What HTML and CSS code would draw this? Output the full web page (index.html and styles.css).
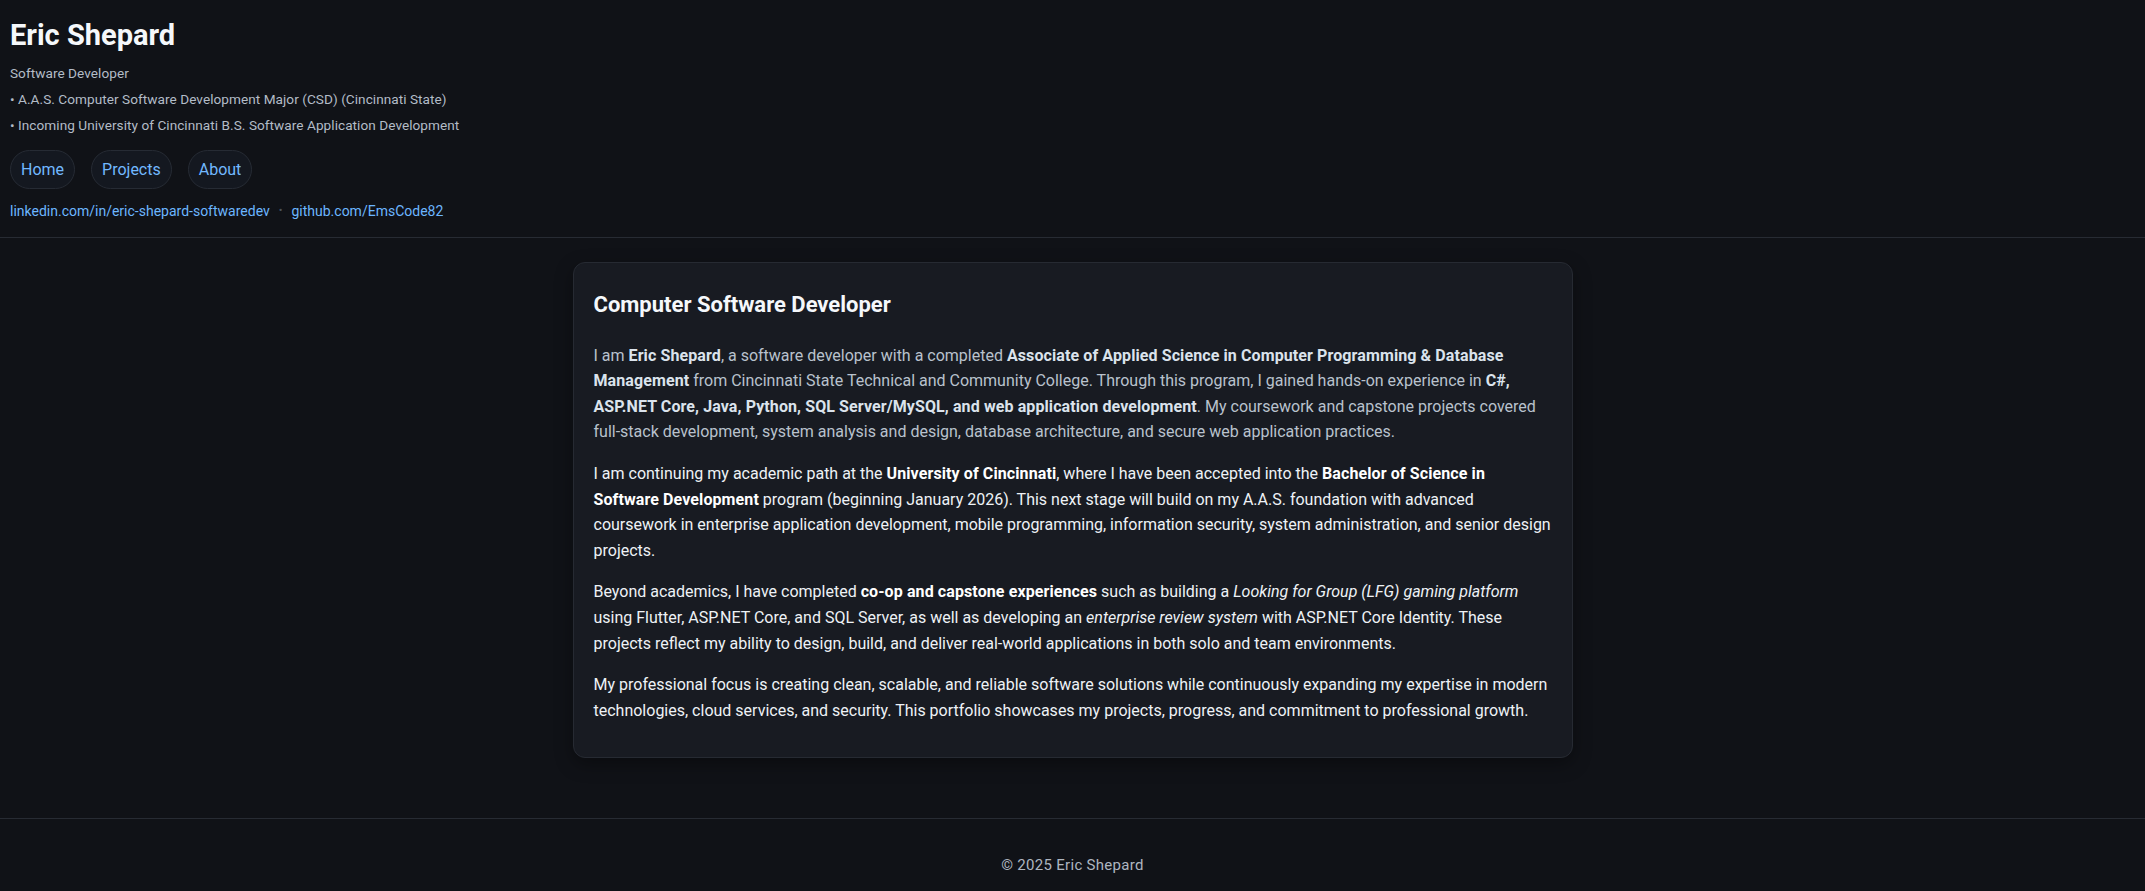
FILE: index.html
```html
<!DOCTYPE html>
<html lang="en">
<head>
<meta charset="utf-8">
<title>Eric Shepard</title>
<link rel="stylesheet" href="styles.css">
</head>
<body>
<header class="site-header">
  <h1 class="name">Eric Shepard</h1>
  <p class="tagline">Software Developer</p>
  <p class="tagline">• A.A.S. Computer Software Development Major (CSD) (Cincinnati State)</p>
  <p class="tagline">• Incoming University of Cincinnati B.S. Software Application Development</p>
  <nav class="nav">
    <a class="pill" href="#">Home</a>
    <a class="pill" href="#">Projects</a>
    <a class="pill" href="#">About</a>
  </nav>
  <div class="social">
    <a href="#">linkedin.com/in/eric-shepard-softwaredev</a>
    <span class="sep">•</span>
    <a href="#">github.com/EmsCode82</a>
  </div>
</header>
<main class="main">
  <section class="card">
    <h2 class="card-title">Computer Software Developer</h2>
    <p class="muted">I am <strong>Eric Shepard</strong>, a software developer with a completed <strong>Associate of Applied Science in Computer Programming &amp; Database Management</strong> from Cincinnati State Technical and Community College. Through this program, I gained hands-on experience in <strong>C#, ASP.NET Core, Java, Python, SQL Server/MySQL, and web application development</strong>. My coursework and capstone projects covered full-stack development, system analysis and design, database architecture, and secure web application practices.</p>
    <p>I am continuing my academic path at the <strong>University of Cincinnati</strong>, where I have been accepted into the <strong>Bachelor of Science in Software Development</strong> program (beginning January 2026). This next stage will build on my A.A.S. foundation with advanced coursework in enterprise application development, mobile programming, information security, system administration, and senior design projects.</p>
    <p>Beyond academics, I have completed <strong>co-op and capstone experiences</strong> such as building a <em>Looking for Group (LFG) gaming platform</em> using Flutter, ASP.NET Core, and SQL Server, as well as developing an <em>enterprise review system</em> with ASP.NET Core Identity. These projects reflect my ability to design, build, and deliver real-world applications in both solo and team environments.</p>
    <p>My professional focus is creating clean, scalable, and reliable software solutions while continuously expanding my expertise in modern technologies, cloud services, and security. This portfolio showcases my projects, progress, and commitment to professional growth.</p>
  </section>
</main>
<footer class="site-footer">
  <p>© 2025 Eric Shepard</p>
</footer>
</body>
</html>
```

FILE: styles.css
```css
* { box-sizing: border-box; }
html, body { margin: 0; padding: 0; }
body {
  background: #101217;
  color: #e6edf3;
  font-family: Roboto, "Liberation Sans", sans-serif;
  font-size: 16px;
  line-height: 1.6;
}
a { text-decoration: none; }

.site-header {
  padding: 17px 10px 16px;
  border-bottom: 1px solid #272b33;
}
.name {
  margin: 0 0 8px;
  font-size: 29px;
  line-height: 1.3;
  font-weight: 700;
  color: #f5f8fb;
}
.tagline {
  margin: 0 0 6px;
  font-size: 13.6px;
  line-height: 20px;
  letter-spacing: 0.05px;
  color: #b3bcc7;
}
.nav {
  display: flex;
  gap: 16px;
  margin: 15px 0 12px;
}
.pill {
  display: inline-block;
  padding: 8px 10px;
  border: 1px solid #262b34;
  border-radius: 999px;
  background: #141820;
  color: #72b9ff;
  font-size: 16px;
  line-height: 21px;
}
.social {
  font-size: 14px;
  line-height: 20px;
  display: flex;
  align-items: center;
  gap: 9px;
}
.social a { color: #6cb6ff; }
.sep { color: #4b525c; font-size: 11px; }

.main {
  padding: 24px 0 60px;
}
.card {
  width: 1000px;
  margin: 0 auto;
  padding: 20px 19px 18px;
  background: #181b22;
  border: 1px solid #262a32;
  border-radius: 12px;
  box-shadow: 0 6px 18px rgba(0, 0, 0, 0.35);
}
.card-title {
  margin: 4px 0 20px 1px;
  font-size: 22px;
  line-height: 36px;
  font-weight: 700;
  color: #f5f8fb;
}
.card p {
  margin: 16px 0 16px 1px;
  color: #eef2f6;
}
.card p.muted { color: #b9c2cd; }
.card p.muted strong { color: #dbe3ec; }
.card strong { font-weight: 700; color: #ffffff; letter-spacing: 0.1px; }

.site-footer {
  border-top: 1px solid #272b33;
  text-align: center;
  padding: 34px 0 20px;
}
.site-footer p {
  margin: 0;
  font-size: 15px;
  letter-spacing: 0.3px;
  color: #aeb6c0;
}
```
